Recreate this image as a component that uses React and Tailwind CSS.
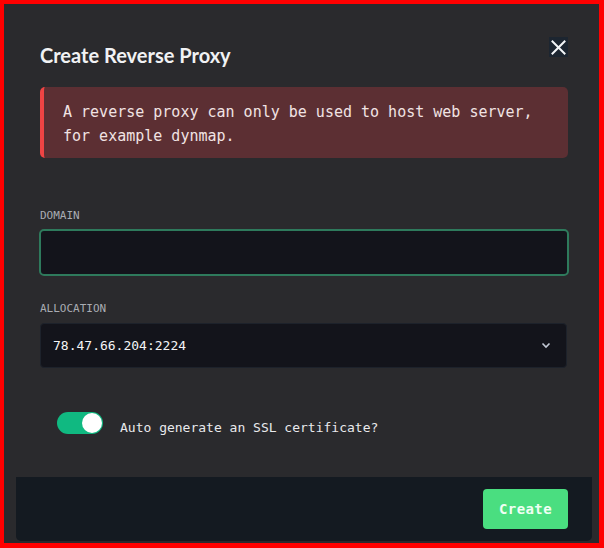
import React from "react";

const mono = { fontFamily: '"DejaVu Sans Mono", "Liberation Mono", monospace' };

export default function App() {
  return (
    <div className="w-[604px] h-[548px] bg-[#ff0000] pl-[4px] pt-[4px] pr-[5px] pb-[5px]">
      <div className="w-full h-full bg-[#2a2a2d] flex flex-col">
        <div className="pl-[35px] pr-[30px] flex flex-col">
          <div className="mt-[33px] flex items-start justify-between pl-[1px]">
            <h2
              className="mt-[4px] text-[20px] leading-7 font-bold text-[#f1f2f4]"
              style={{ fontFamily: 'Lato, "Noto Sans", sans-serif' }}
            >
              Create Reverse Proxy
            </h2>
            <button className="w-[19px] h-[20px] bg-[#1c2530] flex items-center justify-center mr-[1px]">
              <svg width="15" height="15" viewBox="0 0 15 15" fill="none">
                <path d="M1.5 1.5 L13.5 13.5 M13.5 1.5 L1.5 13.5" stroke="#f4f6f8" strokeWidth="2" strokeLinecap="square" />
              </svg>
            </button>
          </div>

          <div
            className="mt-[18px] mx-[1px] rounded-[5px] bg-[#5c2f33] border-l-4 border-[#ef4444] pl-[19px] pr-[12px] pt-[13px] pb-[10px] text-[15px] leading-6 text-[#f1e3e3]"
            style={mono}
          >
            A reverse proxy can only be used to host web server,
            <br />
            for example dynmap.
          </div>

          <label className="mt-[50px] pl-[1px] text-[11px] leading-4 text-[#a9acb3]" style={mono}>
            DOMAIN
          </label>
          <input
            className="mt-[5px] h-[47px] w-full rounded-[5px] border-2 border-[#2e7a5c] bg-[#13141b] outline-none px-3 text-[13px] text-white"
            style={mono}
          />

          <label className="mt-[25px] pl-[1px] text-[11px] leading-4 text-[#a9acb3]" style={mono}>
            ALLOCATION
          </label>
          <div className="mt-[6px] ml-[1px] mr-[2px] h-[45px] rounded-[4px] border border-[#1d222b] bg-[#13141b] flex items-center justify-between pl-[12px] pr-[15px]">
            <span className="text-[13px] text-[#f3f4f6]" style={mono}>
              78.47.66.204:2224
            </span>
            <svg width="10" height="7" viewBox="0 0 10 7" fill="none">
              <path d="M1.5 1.5 L5 5 L8.5 1.5" stroke="#c3cad6" strokeWidth="1.6" />
            </svg>
          </div>

          <div className="mt-[44px] ml-[18px] flex items-start">
            <div className="w-[46px] h-[22px] rounded-full bg-[#10b981] flex items-center justify-end pr-[1px]">
              <div className="w-[20px] h-[20px] rounded-full bg-white" />
            </div>
            <span className="ml-[17px] mt-[5px] text-[13px] leading-[22px] text-[#e8e9ec]" style={mono}>
              Auto generate an SSL certificate?
            </span>
          </div>
        </div>

        <div className="mt-auto mb-[2px] ml-[12px] mr-[7px] h-[64px] shrink-0 rounded-b-[5px] bg-[#141a21] flex justify-end items-start pt-[12px] pr-[24px]">
          <button
            className="w-[85px] h-[40px] rounded-[4px] bg-[#4ade80] text-[14px] font-bold tracking-[0.03em] text-[#effff3]"
            style={mono}
          >
            Create
          </button>
        </div>
      </div>
    </div>
  );
}
